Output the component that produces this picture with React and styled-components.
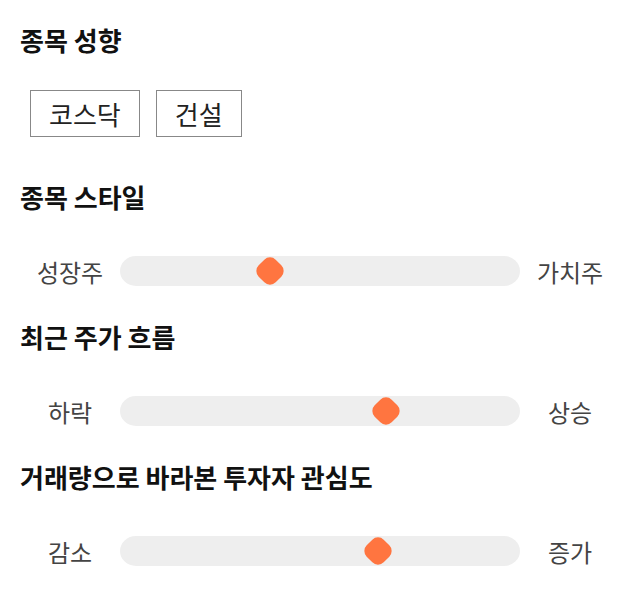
import React from "react";
import styled, { createGlobalStyle } from "styled-components";

const GlobalStyle = createGlobalStyle`
  body {
    margin: 0;
    background: #fff;
    font-family: "Noto Sans CJK KR", "Noto Sans", sans-serif;
  }
`;

const Page = styled.div`
  padding: 21px 20px 0;
  width: 600px;
`;

const Section = styled.section`
  margin-bottom: ${(p) => p.gap}px;
`;

const Heading = styled.h2`
  margin: 0;
  font-size: 26px;
  line-height: 38px;
  font-weight: 700;
  color: #111;
`;

const Chips = styled.div`
  display: flex;
  gap: 16px;
  padding: 31px 10px 0;
`;

const Chip = styled.button`
  height: 47px;
  padding: 0 18px;
  border: 1px solid #888;
  background: #fff;
  font-family: inherit;
  font-size: 26px;
  line-height: 1;
  color: #222;
`;

const SliderRow = styled.div`
  display: flex;
  align-items: center;
  height: 30px;
  margin-top: 40px;
`;

const Label = styled.span`
  width: 100px;
  text-align: center;
  font-size: 24px;
  color: #444;
`;

const Track = styled.div`
  position: relative;
  flex: 1;
  height: 30px;
  border-radius: 16px / 15px;
  background: #eee;
`;

const Thumb = styled.div`
  position: absolute;
  top: 50%;
  width: 24px;
  height: 24px;
  margin: -12px 0 0 -12px;
  border-radius: 8px;
  background: #ff7540;
  transform: rotate(45deg);
`;

const sliders = [
  { title: "종목 스타일", left: "성장주", right: "가치주", pos: 150 },
  { title: "최근 주가 흐름", left: "하락", right: "상승", pos: 266 },
  { title: "거래량으로 바라본 투자자 관심도", left: "감소", right: "증가", pos: 258 },
];

const App = () => (
  <Page>
    <GlobalStyle />
    <Section gap={41}>
      <Heading>종목 성향</Heading>
      <Chips>
        <Chip>코스닥</Chip>
        <Chip>건설</Chip>
      </Chips>
    </Section>
    {sliders.map((s) => (
      <Section key={s.title} gap={32}>
        <Heading>{s.title}</Heading>
        <SliderRow>
          <Label>{s.left}</Label>
          <Track>
            <Thumb style={{ left: s.pos }} />
          </Track>
          <Label>{s.right}</Label>
        </SliderRow>
      </Section>
    ))}
  </Page>
);

export default App;
